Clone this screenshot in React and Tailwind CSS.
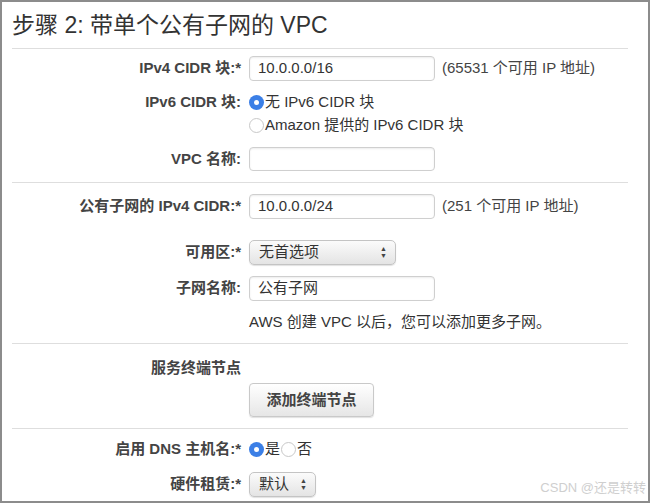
import React from "react";

const font = { fontFamily: '"Liberation Sans", "Noto Sans CJK SC", sans-serif' };

function Row({ label, className = "", children }) {
  return (
    <div className={`grid grid-cols-[229px_1fr] gap-x-2 ${className}`}>
      <div className="flex items-center justify-end text-[15px] font-bold text-[#444] whitespace-nowrap">
        {label}
      </div>
      <div className="flex items-center">{children}</div>
    </div>
  );
}

function TextBox({ value = "" }) {
  return (
    <div className="w-[186px] h-full flex items-center px-2 bg-white border border-[#cfcfcf] rounded-[4px] shadow-[inset_0_1px_2px_rgba(0,0,0,0.08)] text-[15px] text-[#333]">
      {value}
    </div>
  );
}

function Select({ value, width }) {
  return (
    <div
      className={`${width} h-full flex items-center justify-between pl-[9px] pr-[8px] rounded-[5px] border border-[#c4c4c4] bg-gradient-to-b from-[#fbfbfb] to-[#e4e4e4] shadow-[0_1px_1px_rgba(0,0,0,0.12)] text-[15px] text-[#333]`}
    >
      <span>{value}</span>
      <span className="flex flex-col items-center leading-none text-[7px] text-[#444]">
        <span>▲</span>
        <span>▼</span>
      </span>
    </div>
  );
}

function Radio({ checked }) {
  return checked ? (
    <span className="w-[15px] h-[15px] rounded-full bg-[#3b7fe6] flex items-center justify-center shrink-0">
      <span className="w-[5px] h-[5px] rounded-full bg-white" />
    </span>
  ) : (
    <span className="w-[15px] h-[15px] rounded-full border border-[#c8c8c8] bg-white shrink-0" />
  );
}

function Rule({ className = "" }) {
  return <div className={`h-px bg-[#dedede] mr-[20px] ${className}`} />;
}

export default function App() {
  return (
    <div
      className="relative w-[650px] h-[503px] overflow-hidden bg-white border-2 border-[#8c8c8c] pl-[10px]"
      style={font}
    >
      <h1 className="h-[46px] flex items-center text-[23px] font-normal text-[#333]">
        步骤 2: 带单个公有子网的 VPC
      </h1>
      <Rule />

      <Row label="IPv4 CIDR 块:*" className="mt-[7px] h-[24px]">
        <TextBox value="10.0.0.0/16" />
        <span className="ml-[7px] text-[15px] text-[#444]">(65531 个可用 IP 地址)</span>
      </Row>

      <div className="grid grid-cols-[229px_1fr] gap-x-2 mt-[11px]">
        <div className="h-[23px] flex items-center justify-end text-[15px] font-bold text-[#444]">
          IPv6 CIDR 块:
        </div>
        <div className="flex flex-col text-[15px] text-[#333]">
          <label className="h-[23px] flex items-center gap-[1px]">
            <Radio checked />
            <span>无 IPv6 CIDR 块</span>
          </label>
          <label className="h-[23px] flex items-center gap-[1px]">
            <Radio />
            <span>Amazon 提供的 IPv6 CIDR 块</span>
          </label>
        </div>
      </div>

      <Row label="VPC 名称:" className="mt-[10px] h-[24px]">
        <TextBox />
      </Row>

      <Rule className="mt-[11px]" />

      <Row label="公有子网的 IPv4 CIDR:*" className="mt-[11px] h-[24px]">
        <TextBox value="10.0.0.0/24" />
        <span className="ml-[7px] text-[15px] text-[#444]">(251 个可用 IP 地址)</span>
      </Row>

      <Row label="可用区:*" className="mt-[22px] h-[23px]">
        <Select value="无首选项" width="w-[147px]" />
      </Row>

      <Row label="子网名称:" className="mt-[13px] h-[23px]">
        <TextBox value="公有子网" />
      </Row>

      <Row label="" className="mt-[11px] h-[24px]">
        <span className="text-[15px] text-[#333]">AWS 创建 VPC 以后，您可以添加更多子网。</span>
      </Row>

      <Rule className="mt-[9px]" />

      <Row label="服务终端节点" className="mt-[13px] h-[22px]" />

      <Row label="" className="mt-[4px] h-[34px]">
        <button className="w-[125px] h-full rounded-[4px] border border-[#c9c9c9] bg-gradient-to-b from-[#ffffff] to-[#e6e6e6] shadow-[0_1px_1px_rgba(0,0,0,0.12)] text-[15px] font-bold text-[#444]">
          添加终端节点
        </button>
      </Row>

      <Rule className="mt-[11px]" />

      <Row label="启用 DNS 主机名:*" className="mt-[9px] h-[22px]">
        <label className="flex items-center gap-[1px] text-[15px] text-[#333]">
          <Radio checked />
          <span>是</span>
          <Radio />
          <span>否</span>
        </label>
      </Row>

      <Row label="硬件租赁:*" className="mt-[12px] h-[24px]">
        <Select value="默认" width="w-[67px]" />
      </Row>

      <div className="absolute right-[2px] bottom-[4px] text-[13px] text-[#cfcfcf]">CSDN @还是转转</div>
    </div>
  );
}
